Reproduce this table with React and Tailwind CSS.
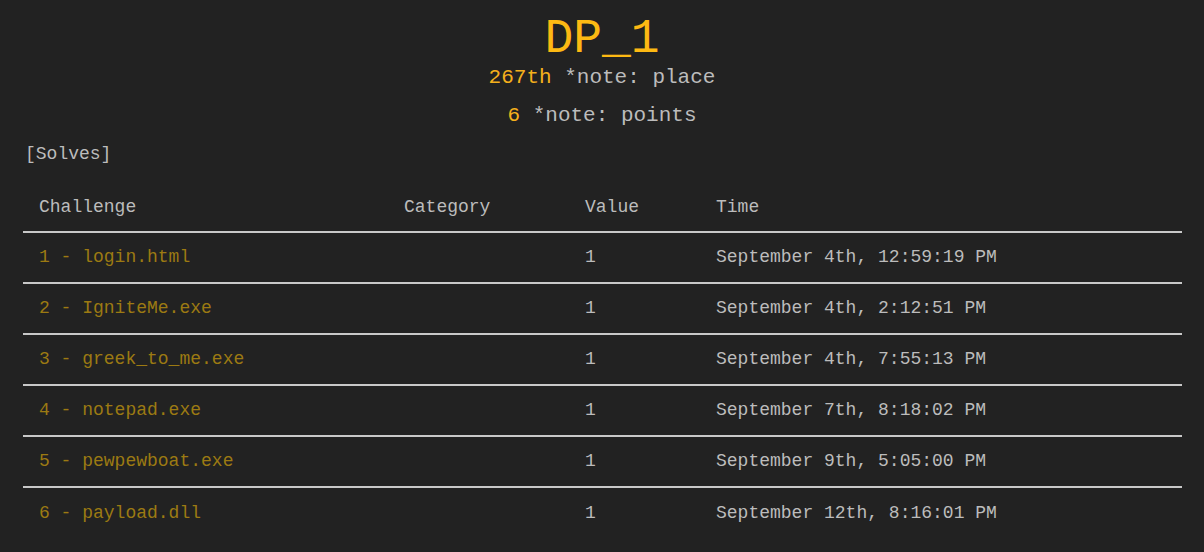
export default function App() {
  const solves = [
    { name: '1 - login.html', value: 1, time: 'September 4th, 12:59:19 PM' },
    { name: '2 - IgniteMe.exe', value: 1, time: 'September 4th, 2:12:51 PM' },
    { name: '3 - greek_to_me.exe', value: 1, time: 'September 4th, 7:55:13 PM' },
    { name: '4 - notepad.exe', value: 1, time: 'September 7th, 8:18:02 PM' },
    { name: '5 - pewpewboat.exe', value: 1, time: 'September 9th, 5:05:00 PM' },
    { name: '6 - payload.dll', value: 1, time: 'September 12th, 8:16:01 PM' },
  ]

  return (
    <div className="min-h-screen bg-[#222222] text-[#bcbcbc] font-['Courier_New','Liberation_Mono',monospace]">
      <main className="px-[23px] pt-[12px]">
        {/* Team header */}
        <div className="text-center">
          <h1 className="text-[48px] leading-[54px] text-[#fdb913]">DP_1</h1>
          <p className="text-[21px] leading-[24px]">
            <span className="text-[#f5b01c]">267th</span> *note: place
          </p>
          <p className="text-[21px] leading-[24px] mt-[14px]">
            <span className="text-[#f5b01c]">6</span> *note: points
          </p>
        </div>

        <div className="mt-[15px] ml-[2px] text-[18px] leading-[22px]">[Solves]</div>

        {/* Solves table */}
        <table className="w-[1159px] mt-[16px] text-[18px] border-collapse">
          <thead>
            <tr className="border-b-2 border-[#c8c8c8]">
              <td className="w-[365px] px-[16px] h-[51px] pt-[2px]">Challenge</td>
              <td className="w-[181px] px-[16px] pt-[2px]">Category</td>
              <td className="w-[131px] px-[16px] pt-[2px]">Value</td>
              <td className="px-[16px] pt-[2px]">Time</td>
            </tr>
          </thead>
          <tbody>
            {solves.map((s, i) => (
              <tr key={i} className={i < solves.length - 1 ? 'border-b-2 border-[#c8c8c8]' : ''}>
                <td className="px-[16px] h-[51px] text-[#9c7a12]">{s.name}</td>
                <td className="px-[16px]"></td>
                <td className="px-[16px]">{s.value}</td>
                <td className="px-[16px]">{s.time}</td>
              </tr>
            ))}
          </tbody>
        </table>
      </main>
    </div>
  )
}
